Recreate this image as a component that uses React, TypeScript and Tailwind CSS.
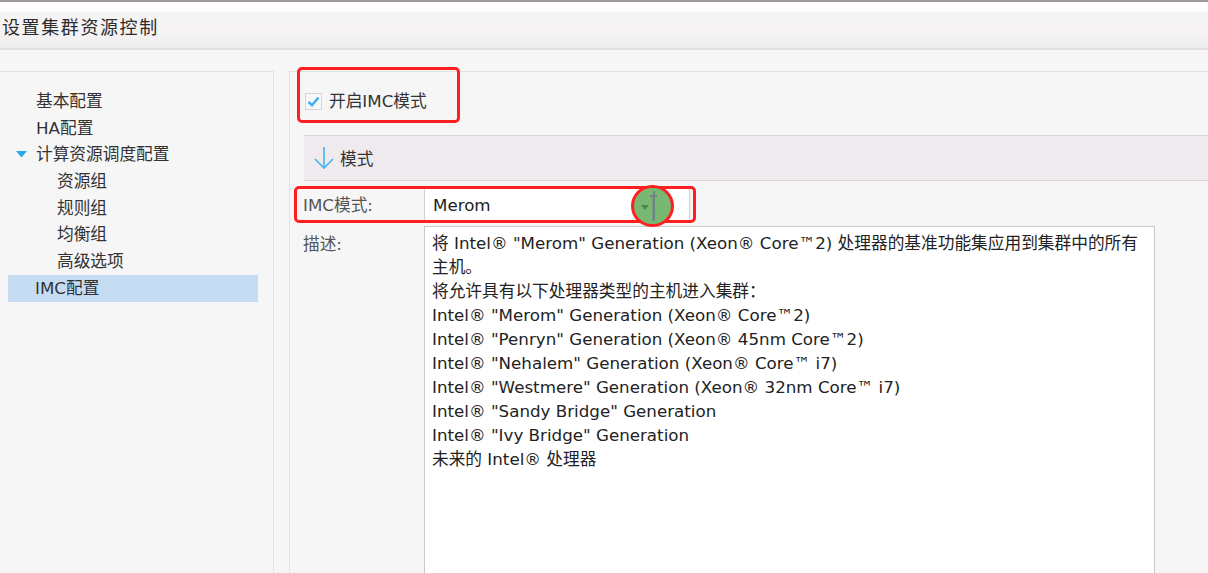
import { ChevronDown } from "lucide-react";

// 设置集群资源控制 — IMC 配置页
const navItems = [
  { label: "基本配置", level: 1 },
  { label: "HA配置", level: 1 },
  { label: "计算资源调度配置", level: 1, open: true },
  { label: "资源组", level: 2 },
  { label: "规则组", level: 2 },
  { label: "均衡组", level: 2 },
  { label: "高级选项", level: 2 },
  { label: "IMC配置", level: 1, selected: true },
];

const descLines = [
  '将 Intel® "Merom" Generation (Xeon® Core™2) 处理器的基准功能集应用到集群中的所有',
  "主机。",
  "将允许具有以下处理器类型的主机进入集群：",
  'Intel® "Merom" Generation (Xeon® Core™2)',
  'Intel® "Penryn" Generation (Xeon® 45nm Core™2)',
  'Intel® "Nehalem" Generation (Xeon® Core™ i7)',
  'Intel® "Westmere" Generation (Xeon® 32nm Core™ i7)',
  'Intel® "Sandy Bridge" Generation',
  'Intel® "Ivy Bridge" Generation',
  "未来的 Intel® 处理器",
];

export default function App() {
  return (
    <div className="relative h-[573px] w-[1208px] overflow-hidden bg-[#f6f6f6] font-['DejaVu_Sans','Noto_Sans_CJK_SC',sans-serif] text-[#333]">
      {/* title bar */}
      <div className="h-[2px] bg-[#9c9a9b]" />
      <div className="h-[10px] bg-[#fffcfe]" />
      <div className="flex h-[36px] items-start bg-gradient-to-b from-[#f5f5f5] via-[#f6f3f5] to-[#eeeeee] pl-[2px] pt-[2px] text-[18px] tracking-[1.6px] text-[#2b2b2b]">
        设置集群资源控制
      </div>
      <div className="h-[2px] bg-[#e3dfe1]" />

      <div className="flex pt-[21px]">
        {/* left nav */}
        <aside className="h-[502px] w-[274px] border-t border-r border-[#e2e2e2] pt-[16px]">
          {navItems.map((it) => (
            <div
              key={it.label}
              className={
                "ml-[8px] flex h-[26.7px] w-[250px] items-center text-[16.7px] " +
                (it.selected ? "bg-[#c5dcf3] pl-[27px]" : it.level === 2 ? "pl-[49px]" : "pl-[8px]")
              }
            >
              {!it.selected && it.level === 1 && (
                <span className="flex w-[20px] items-center">
                  {it.open && (
                    <svg width="11" height="7" viewBox="0 0 11 7">
                      <path d="M0 0 H11 L5.5 6.5 Z" fill="#2aa7e8" />
                    </svg>
                  )}
                </span>
              )}
              <span>{it.label}</span>
            </div>
          ))}
        </aside>

        {/* right content */}
        <main className="ml-[15px] h-[502px] flex-1 border-t border-l border-[#e2e2e2]">
          <label className="flex h-[57px] items-center gap-[7px] pl-[15px] pt-[1px] text-[16.7px]">
            <span className="flex h-[17px] w-[17px] items-center justify-center border border-[#d6d6d6] bg-[#f8f8f8]">
              <svg width="13" height="11" viewBox="0 0 13 11">
                <path d="M1.5 6 L5 9.2 L11.5 1.5" fill="none" stroke="#3ab0ee" strokeWidth="2.4" />
              </svg>
            </span>
            <span className="pt-[2px]">开启IMC模式</span>
          </label>

          <div className="ml-[14px] mt-[6px] flex h-[46px] items-center border-y border-[#d9d5d6] bg-[#efeaed] pl-[9px] text-[16.7px]">
            <svg width="22" height="24" viewBox="0 0 22 24" className="mr-[5px]">
              <path d="M11 1 V22 M2 13 L11 22 L20 13" fill="none" stroke="#45b6ef" strokeWidth="1.6" />
            </svg>
            <span className="pt-[3px]">模式</span>
          </div>

          <div className="mt-[7px] flex items-center pl-[13px]">
            <span className="w-[121px] pt-[2px] text-[16.7px] text-[#555]">IMC模式:</span>
            <div className="relative flex h-[33px] w-[266px] items-center border border-[#d0d0d6] bg-white pl-[8px] pt-[2px] text-[16.7px] text-[#222]">
              Merom
              <ChevronDown className="hidden" />
            </div>
          </div>

          <div className="mt-[5px] flex pl-[13px]">
            <span className="w-[121px] pt-[6px] text-[16.7px] text-[#555]">描述:</span>
            <div className="h-[360px] w-[731px] border border-[#c9c9d2] bg-white pl-[7px] pt-[4px] text-[16.7px] leading-[24px] text-[#222]">
              {descLines.map((l) => (
                <div key={l} className="whitespace-nowrap">
                  {l}
                </div>
              ))}
            </div>
          </div>
        </main>
      </div>

      {/* annotations */}
      <div className="absolute left-[297px] top-[67px] h-[56px] w-[163px] rounded-[5px] border-[3px] border-[#ff1f1f]" />
      <div className="absolute left-[294px] top-[186px] h-[37px] w-[402px] rounded-[5px] border-[3px] border-[#ff1f1f]" />
      <div className="absolute left-[631px] top-[185px] flex h-[42px] w-[43px] items-center justify-center rounded-full border-[3px] border-[#ff1f1f] bg-[#78b872]">
        <svg width="30" height="34" viewBox="0 0 30 34">
          <path d="M3 16 H11 L7 21 Z" fill="#4d8a48" />
          <path d="M16 2 V31" stroke="#3b6a8a" strokeWidth="1" />
          <path d="M12 7 H19 M15.5 7 V32" stroke="#7c7c86" strokeWidth="2" />
        </svg>
      </div>
    </div>
  );
}
